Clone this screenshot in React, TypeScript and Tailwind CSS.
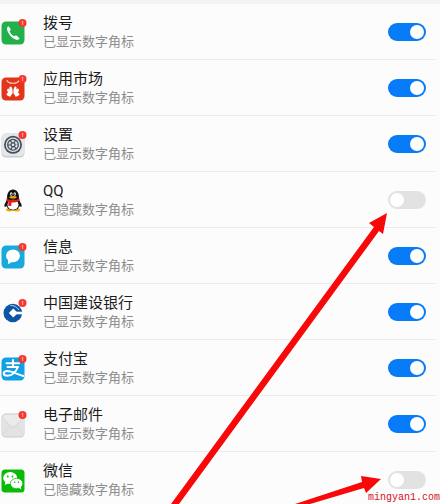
import { useState } from "react";
import type { ReactNode } from "react";

type AppItem = {
  id: string;
  name: string;
  shown: boolean;
  badge: boolean;
  icon: ReactNode;
};

const apps: AppItem[] = [
  {
    id: "phone",
    name: "拨号",
    shown: true,
    badge: true,
    icon: (
      <>
        <rect x="1.5" y="3.5" width="23" height="23" rx="4.5" fill="#22b04b" />
        <path d="M8.6 8.3c-1.2.6-2 1.7-1.5 3.4 1.3 4.8 4.7 8.3 9.2 10 1.5.5 2.7-.3 3.2-1.5l-3.4-3-2.1 1.1c-2-1.2-3.5-2.8-4.4-5l1.3-1.8z" fill="#fff" />
      </>
    ),
  },
  {
    id: "market",
    name: "应用市场",
    shown: true,
    badge: true,
    icon: (
      <>
        <rect x="1.5" y="3.5" width="23" height="23" rx="4.5" fill="#e2351b" />
        <path d="M7 6.5c1.2 3.6 10.8 3.6 12 0" fill="none" stroke="#ffd9cf" strokeWidth="1.1" strokeLinecap="round" />
        <g fill="#fff">
          <ellipse cx="11.5" cy="16.5" rx="1.5" ry="4" transform="rotate(-8 11.5 20)" />
          <ellipse cx="14.5" cy="16.5" rx="1.5" ry="4" transform="rotate(8 14.5 20)" />
          <ellipse cx="9.4" cy="18" rx="1.6" ry="3.7" transform="rotate(-26 9.4 18)" />
          <ellipse cx="16.6" cy="18" rx="1.6" ry="3.7" transform="rotate(26 16.6 18)" />
          <ellipse cx="8.8" cy="20.8" rx="1.3" ry="2.5" transform="rotate(-62 8.8 20.8)" />
          <ellipse cx="17.2" cy="20.8" rx="1.3" ry="2.5" transform="rotate(62 17.2 20.8)" />
        </g>
      </>
    ),
  },
  {
    id: "settings",
    name: "设置",
    shown: true,
    badge: true,
    icon: (
      <>
        <rect x="1.5" y="3.5" width="23" height="24" rx="4.5" fill="#c9cdd1" />
        <rect x="1.5" y="3.5" width="23" height="22.5" rx="4.5" fill="#e4e7ea" />
        <circle cx="13" cy="14.8" r="9" fill="#46505b" />
        <circle cx="13" cy="14.8" r="6.6" fill="none" stroke="#dfe3e7" strokeWidth="1.3" />
        <circle cx="13" cy="14.8" r="3.7" fill="none" stroke="#dfe3e7" strokeWidth="2" strokeDasharray="2.8 1.07" />
        <circle cx="13" cy="14.8" r="1.3" fill="#eef0f2" />
      </>
    ),
  },
  {
    id: "qq",
    name: "QQ",
    shown: false,
    badge: false,
    icon: (
      <>
        <path d="M7.2 14.5c-1.8 1.7-3.2 4-2.8 6.200 1 .4 2.100-.8 2.700-1.800zM18.800 14.500c1.800 1.700 3.200 4 2.800 6.200-1 .4-2.100-.8-2.700-1.800z" fill="#111" />
        <ellipse cx="9.600" cy="23.800" rx="3.500" ry="1.700" fill="#f5a300" />
        <ellipse cx="16.400" cy="23.800" rx="3.500" ry="1.700" fill="#f5a300" />
        <ellipse cx="13" cy="17.500" rx="7.200" ry="6.800" fill="#111" />
        <path d="M7 12C7 7 9.200 3.500 13 3.500S19 7 19 12l-.8 3H7.800z" fill="#111" />
        <ellipse cx="13" cy="18.700" rx="5.500" ry="5" fill="#fff" />
        <ellipse cx="11.300" cy="8" rx="1.200" ry="1.700" fill="#fff" />
        <ellipse cx="14.700" cy="8" rx="1.200" ry="1.700" fill="#fff" />
        <circle cx="11.600" cy="8.200" r=".6" fill="#111" />
        <circle cx="14.400" cy="8.200" r=".6" fill="#111" />
        <ellipse cx="13" cy="11.300" rx="3.700" ry="1.200" fill="#f5a300" />
        <path d="M6.600 12.500c3.500 2 9.300 2 12.800 0l.5 2.300c-2.700 1.400-5.700 1.900-8.400 1.700l-.3 3.600-3-.3.300-4-2.300-1z" fill="#e11d1d" />
      </>
    ),
  },
  {
    id: "messages",
    name: "信息",
    shown: true,
    badge: true,
    icon: (
      <>
        <rect x="1.5" y="3.5" width="23" height="23" rx="4.5" fill="#19a9dc" />
        <ellipse cx="13" cy="13.8" rx="7" ry="6.4" fill="#fff" />
        <path d="M8 17v5.2l5-2.7z" fill="#fff" />
      </>
    ),
  },
  {
    id: "ccb",
    name: "中国建设银行",
    shown: true,
    badge: true,
    icon: (
      <>
        <circle cx="12.8" cy="15" r="9.3" fill="#0b55a5" />
        <path d="M13.300 10.500l4.500 4.500-4.500 4.500-4.500-4.500z" fill="#fcfcfc" />
        <path d="M16 13.700h7v2.600h-7z" fill="#fcfcfc" />
        <path d="M10.500 7.500c3.500-.3 6.500 1.500 8.500 4.500" stroke="#fcfcfc" strokeWidth=".7" fill="none" />
      </>
    ),
  },
  {
    id: "alipay",
    name: "支付宝",
    shown: true,
    badge: true,
    icon: (
      <>
        <rect x="1.5" y="3.5" width="23" height="23" rx="4.5" fill="#119fe6" />
        <g fill="none" stroke="#fff" strokeWidth="2" strokeLinecap="round">
          <path d="M6.500 9.300h12.500M13 6v7M7.500 13h10.300" />
          <path d="M17.800 13c-1.800 5-5.800 8.700-10.300 8.700-5 0-5-4.700-.3-4.700 5 0 10 3.300 16.300 5" />
        </g>
      </>
    ),
  },
  {
    id: "mail",
    name: "电子邮件",
    shown: true,
    badge: true,
    icon: (
      <>
        <rect x="1.5" y="3.5" width="23" height="24" rx="4.5" fill="#cbcbcb" />
        <rect x="2" y="3.5" width="22" height="23" rx="4" fill="#e3e3e3" />
        <path d="M2.5 24.5l8-8.500M23.500 24.500l-8-8.500" stroke="#d8d8d8" fill="none" />
        <path d="M2.500 8l8.500 8.300c1.200 1.100 2.800 1.100 4 0L23.500 8c-.3-2.400-1.500-3.800-3.800-3.800H6.300C4 4.200 2.800 5.600 2.500 8z" fill="#ebebeb" stroke="#cfcfcf" strokeWidth=".7" />
      </>
    ),
  },
  {
    id: "wechat",
    name: "微信",
    shown: false,
    badge: false,
    icon: (
      <>
        <rect x="1.5" y="3.5" width="23" height="23" rx="3.5" fill="#09bb07" />
        <ellipse cx="10.200" cy="12" rx="7" ry="5.900" fill="#fff" />
        <path d="M5.500 15.500l-.8 3.600 4-1.900z" fill="#fff" />
        <ellipse cx="16.600" cy="17.500" rx="6.200" ry="5.200" fill="#fff" stroke="#09bb07" strokeWidth=".8" />
        <path d="M18.500 21.500l2.700 2-.5-3.500z" fill="#fff" />
        <g fill="#09bb07">
          <circle cx="7.800" cy="10.500" r=".9" />
          <circle cx="12.500" cy="10.500" r=".9" />
          <circle cx="14.700" cy="16.200" r=".8" />
          <circle cx="18.500" cy="16.200" r=".8" />
        </g>
      </>
    ),
  },
];

function AppIcon({ item }: { item: AppItem }) {
  return (
    <svg viewBox="0 0 28 28" className="w-7 h-7 shrink-0" aria-hidden="true">
      {item.icon}
      {item.badge && (
        <>
          <circle cx="22.500" cy="5" r="4" fill="#f5382f" />
          <path d="M21.700 3.800l1-.7v3.800" fill="none" stroke="#ffc9c4" strokeWidth=".8" />
        </>
      )}
    </svg>
  );
}

function AppRow({ item }: { item: AppItem }) {
  const [on, setOn] = useState(item.shown);

  return (
    <li className="flex items-center h-14 mr-1 pr-[10px] border-b border-[#ececec]">
      <AppIcon item={item} />
      <label htmlFor={item.id} className="flex-1 pl-[15px]">
        <span className="block text-[15px] leading-5 text-[#1c1c1c]">{item.name}</span>
        <span className="block text-[13px] leading-[18px] text-[#8c8c8c]">
          {on ? "已显示数字角标" : "已隐藏数字角标"}
        </span>
      </label>
      <input
        id={item.id}
        type="checkbox"
        role="switch"
        checked={on}
        onChange={() => setOn(!on)}
        className="appearance-none flex items-center shrink-0 w-[38px] h-[18px] px-[2px] rounded-full bg-[#e2e2e2] checked:bg-[#087cf8] checked:justify-end before:block before:w-[14px] before:h-[14px] before:rounded-full before:bg-white"
      />
    </li>
  );
}

function Arrows() {
  return (
    <svg viewBox="0 0 440 504" className="absolute top-0 right-0 w-[440px] h-[504px] pointer-events-none" fill="#f80808" aria-hidden="true">
      <path d="M387 213L369 223L374 227L171 504H179L379 231L383 234Z" />
      <path d="M381 479L361 476L362 482L295 504H310L364 488L366 493Z" />
    </svg>
  );
}

function App() {
  return (
    <main className="relative h-screen overflow-hidden bg-[#fcfcfc] font-['Roboto','Noto_Sans_CJK_SC',sans-serif]">
      <div className="h-1 bg-[#f3f3f3]"></div>
      <ul>
        {apps.map((item) => (
          <AppRow key={item.id} item={item} />
        ))}
      </ul>
      <Arrows />
      <p className="absolute bottom-0 right-0 text-[10px] leading-3 text-[#d8101c] font-['Liberation_Mono',monospace]">mingyan1.com</p>
    </main>
  );
}

export default App;
